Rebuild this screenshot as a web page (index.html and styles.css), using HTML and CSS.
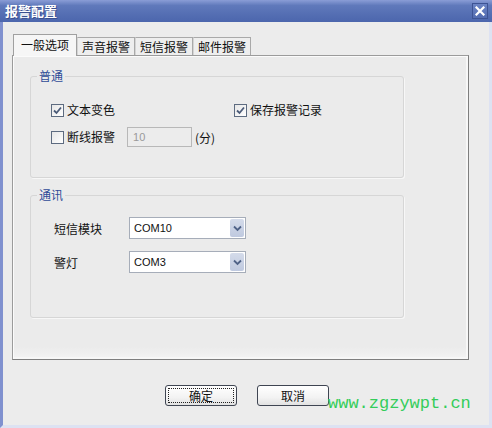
FILE: index.html
```html
<!DOCTYPE html>
<html lang="zh-CN">
<head>
<meta charset="utf-8">
<title>报警配置</title>
<link rel="stylesheet" href="styles.css">
</head>
<body>
<div class="window">
  <div class="titlebar">
    <span class="title">报警配置</span>
    <span class="close">
      <svg width="10" height="10" viewBox="0 0 10 10"><path d="M1.5 1.5 L8.5 8.5 M8.5 1.5 L1.5 8.5" stroke="#fff" stroke-width="2.2" stroke-linecap="square"/></svg>
    </span>
  </div>
  <div class="frame">
    <div class="tabs">
      <div class="tab active">一般选项</div>
      <div class="tab">声音报警</div>
      <div class="tab">短信报警</div>
      <div class="tab">邮件报警</div>
    </div>
    <div class="panel">
      <fieldset class="group">
        <legend>普通</legend>
        <div class="group-body g1">
          <div class="row">
            <label class="check col1"><span class="box"><svg width="11" height="11" viewBox="0 0 11 11"><path d="M2 5.5 L4.5 8 L9 2.5" fill="none" stroke="#4b5b78" stroke-width="1.8"/></svg></span>文本变色</label>
            <label class="check"><span class="box"><svg width="11" height="11" viewBox="0 0 11 11"><path d="M2 5.5 L4.5 8 L9 2.5" fill="none" stroke="#4b5b78" stroke-width="1.8"/></svg></span>保存报警记录</label>
          </div>
          <div class="row">
            <label class="check"><span class="box"></span>断线报警</label>
            <span class="textbox">10</span>
            <span class="unit">(分)</span>
          </div>
        </div>
      </fieldset>
      <fieldset class="group g2wrap">
        <legend>通讯</legend>
        <div class="group-body g2">
          <div class="field">
            <span class="flabel">短信模块</span>
            <span class="combo"><span class="cval">COM10</span><span class="arrow"><svg width="9" height="7" viewBox="0 0 9 7"><path d="M1 1.5 L4.5 5 L8 1.5" fill="none" stroke="#4f6287" stroke-width="1.8"/></svg></span></span>
          </div>
          <div class="field">
            <span class="flabel">警灯</span>
            <span class="combo"><span class="cval">COM3</span><span class="arrow"><svg width="9" height="7" viewBox="0 0 9 7"><path d="M1 1.5 L4.5 5 L8 1.5" fill="none" stroke="#4f6287" stroke-width="1.8"/></svg></span></span>
          </div>
        </div>
      </fieldset>
    </div>
    <div class="buttons">
      <button class="btn focus">确定</button>
      <button class="btn">取消</button>
    </div>
  </div>
  <div class="watermark">www.zgzywpt.cn</div>
</div>
</body>
</html>
```
FILE: styles.css
```css
* { box-sizing: border-box; }
html, body {
  margin: 0;
  padding: 0;
  width: 492px;
  height: 428px;
  overflow: hidden;
  background: #ececec;
}
body {
  font-family: "Liberation Sans", "Noto Sans CJK SC", sans-serif;
  font-size: 12px;
  color: #111;
}
.window {
  position: relative;
  width: 492px;
  height: 428px;
  display: flex;
  flex-direction: column;
}
.titlebar {
  height: 22px;
  flex: none;
  display: flex;
  align-items: center;
  justify-content: space-between;
  padding: 0 4px 0 5px;
  background: linear-gradient(to bottom, #8a9dd6 0, #6079bb 25%, #536db2 70%, #4c66ad 100%);
}
.title {
  color: #fff;
  font-family: "Noto Sans CJK SC", sans-serif;
  font-weight: bold;
  font-size: 13px;
  line-height: 14px;
  text-shadow: 1px 1px 0 #3a4f8e;
}
.close {
  width: 16px;
  height: 16px;
  display: flex;
  align-items: center;
  justify-content: center;
  border: 1px solid #3d5394;
  background: linear-gradient(#6c84c4, #536cb1);
}
.frame {
  flex: 1;
  background: #ececec;
  border-left: 3px solid #8091cf;
  border-right: 3px solid #dde2f2;
  border-bottom: 3px solid #dde2f2;
}
.tabs {
  display: flex;
  align-items: flex-end;
  margin: 12px 0 0 10px;
}
.tab {
  height: 18px;
  padding: 0 4px;
  border: 1px solid #a9a9a9;
  border-bottom: none;
  border-left-color: #d4d4d4;
  background: #eeeeee;
  font-family: "Noto Sans CJK SC", sans-serif;
  font-size: 12px;
  line-height: 17px;
  color: #111;
}
.tab.active {
  height: 22px;
  padding: 0 7px;
  border-color: #a0a0a0;
  background: #f6f6f6;
  line-height: 20px;
  margin-bottom: -1px;
  position: relative;
  z-index: 1;
}
.panel {
  margin-left: 9px;
  width: 457px;
  height: 305px;
  border: 1px solid #9b9b9b;
  border-right-color: #7e7e7e;
  border-bottom-color: #7e7e7e;
  box-shadow: inset 1px 1px 0 #fbfbfb, inset -2px -2px 0 #f7f7f7;
  background: linear-gradient(to bottom, #ebebeb 96%, #f3f3f3 100%);
  padding: 14px 0 0 17px;
}
.group {
  margin: 0;
  padding: 0;
  width: 374px;
  border: 1px solid #d6d6d6;
  border-radius: 3px;
  box-shadow: 1px 1px 0 #f7f7f7;
}
.group legend {
  margin-left: 6px;
  padding: 0 2px;
  font-family: "Noto Sans CJK SC", sans-serif;
  font-size: 12px;
  line-height: 12px;
  color: #2f4b98;
}
.g2wrap { margin-top: 11px; }
.group-body.g1 {
  padding: 18px 0 30px 20px;
  display: flex;
  flex-direction: column;
  gap: 7px;
}
.row {
  height: 20px;
  display: flex;
  align-items: center;
}
.check {
  display: flex;
  align-items: center;
  font-family: "Noto Sans CJK SC", sans-serif;
  line-height: 14px;
}
.check.col1 { width: 183px; }
.box {
  width: 13px;
  height: 13px;
  margin-right: 3px;
  border: 1px solid #5d6b80;
  background: linear-gradient(135deg, #e6e6e6, #ffffff);
  display: flex;
  align-items: center;
  justify-content: center;
}
.textbox {
  margin-left: 12px;
  width: 65px;
  height: 20px;
  border: 1px solid #b8b8b8;
  background: #ececec;
  color: #9a9a9a;
  padding-left: 5px;
  line-height: 18px;
  font-size: 11px;
}
.unit {
  margin-left: 3px;
  font-family: "Noto Sans CJK SC", sans-serif;
}
.group-body.g2 {
  padding: 16px 0 44px 23px;
  display: flex;
  flex-direction: column;
  gap: 12px;
}
.field {
  height: 22px;
  display: flex;
  align-items: center;
}
.flabel {
  width: 75px;
  font-family: "Noto Sans CJK SC", sans-serif;
}
.combo {
  width: 117px;
  height: 22px;
  border: 1px solid #a6adb9;
  background: #fff;
  display: flex;
  align-items: center;
  justify-content: space-between;
  padding: 1px;
}
.cval {
  padding-left: 3px;
  font-size: 11px;
}
.arrow {
  width: 14px;
  height: 18px;
  background: linear-gradient(#d4dbea, #bfc9df);
  border-radius: 2px;
  display: flex;
  align-items: center;
  justify-content: center;
}
.buttons {
  display: flex;
  gap: 20px;
  margin: 25px 0 0 162px;
}
.btn {
  width: 72px;
  height: 21px;
  padding: 0;
  border: 1px solid #3f4552;
  border-radius: 3px;
  background: linear-gradient(#ffffff, #f3f3f3 60%, #e2e2e2);
  font-family: "Noto Sans CJK SC", sans-serif;
  font-size: 12px;
  line-height: 18px;
  color: #111;
}
.btn.focus {
  outline: 1px dotted #222;
  outline-offset: -4px;
}
.watermark {
  position: absolute;
  left: 328px;
  top: 394px;
  font-family: "Liberation Mono", monospace;
  font-size: 17px;
  line-height: 20px;
  color: #34cc5a;
}
```
